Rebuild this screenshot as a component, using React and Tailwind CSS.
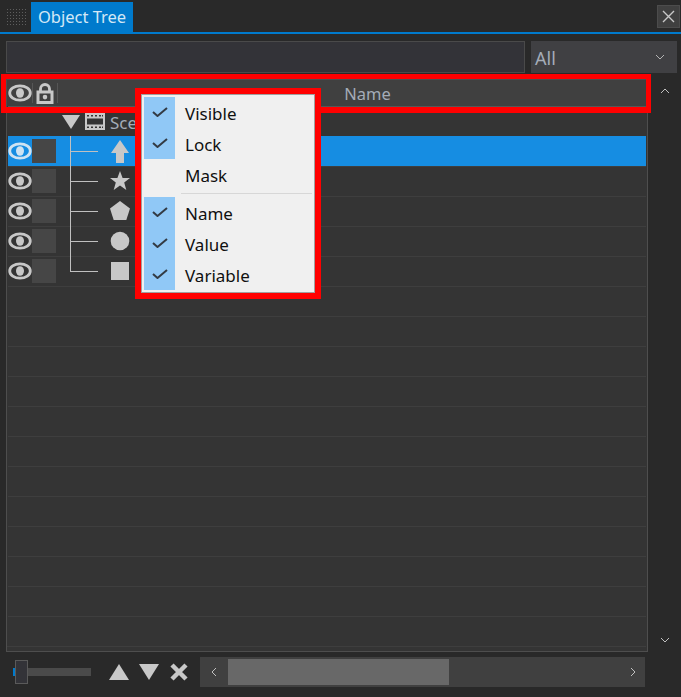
const fontStack = { fontFamily: '"Noto Sans", "Open Sans", sans-serif' };

const Eye = ({ color = "#c8c8c8" }) => (
  <svg width="24" height="18" viewBox="0 0 24 18">
    <ellipse cx="12" cy="9" rx="10.300" ry="7.200" fill="none" stroke={color} strokeWidth="2.800" />
    <ellipse cx="12" cy="9" rx="4" ry="4.800" fill={color} />
  </svg>
);

const Lock = () => (
  <svg width="18" height="21" viewBox="0 0 18 21">
    <path d="M4.500 9V6a4.500 4.500 0 0 1 9 0v3" fill="none" stroke="#c8c8c8" strokeWidth="2.800" />
    <path fillRule="evenodd" d="M0.500 7.500h17v13.500h-17zM3.500 10.500v7.500h11v-7.500zM9 11.800a2.300 2.300 0 1 1 0 4.600a2.300 2.300 0 0 1 0-4.600z" fill="#c8c8c8" />
  </svg>
);

const Film = () => (
  <svg width="20" height="17" viewBox="0 0 20 17">
    <path
      fillRule="evenodd"
      fill="#c8c8c8"
      d="M0 0h20v17H0zM2 2v1.500h2V2zM6 2v1.500h2V2zM10 2v1.500h2V2zM14 2v1.500h2V2zM17 2v1.500h1V2zM2 5.500v6h16v-6zM2 13.500V15h2v-1.500zM6 13.500V15h2v-1.500zM10 13.500V15h2v-1.500zM14 13.500V15h2v-1.500zM17 13.500V15h1v-1.500z"
    />
  </svg>
);

const shapes = [
  <polygon key="arrow" points="10,0 19,13 14,13 14,23 6,23 6,13 1,13" fill="#c8c8c8" />,
  <polygon key="star" points="10,1 12.600,8 20,8 14.200,12.500 16.300,20 10,15.600 3.700,20 5.800,12.500 0,8 7.400,8" fill="#c8c8c8" />,
  <polygon key="pentagon" points="10,1 20,8.500 16.300,20 3.700,20 0,8.500" fill="#c8c8c8" />,
  <circle key="circle" cx="10" cy="11" r="9.300" fill="#c8c8c8" />,
  <rect key="square" x="1" y="2" width="18" height="18" fill="#c8c8c8" />,
];

const ObjectRow = ({ shape, selected, last }) => (
  <div className={`flex h-[30px] items-center border-t ${selected ? "border-[#168de2] bg-[#168de2]" : "border-[#3e3e3e]"}`}>
    <div className="-mt-px flex w-[24px] justify-center">
      <Eye color={selected ? "#cfe3f2" : "#c8c8c8"} />
    </div>
    <div className="-mt-px h-[24px] w-[24px] bg-[#464646]" />
    <div className="-mt-px ml-[14px] flex h-[30px] w-[28px] flex-col self-start">
      <div className="h-[16px] border-b border-l border-[#c0c0c0]" />
      {!last && <div className="h-[14px] border-l border-[#c0c0c0]" />}
    </div>
    <svg className="ml-[12px]" width="20" height="24" viewBox="0 0 20 24">
      {shape}
    </svg>
  </div>
);

const MenuItem = ({ label, checked }) => (
  <div className="flex h-[31px] items-center">
    <div className={`flex h-full w-[31px] items-center justify-center ${checked ? "bg-[#90c8f6]" : ""}`}>
      {checked && (
        <svg width="16" height="10" viewBox="0 0 16 10" className="mb-px">
          <polyline points="1,5 5.500,9 15,1" fill="none" stroke="#333b44" strokeWidth="2" />
        </svg>
      )}
    </div>
    <span className="ml-[10px] pt-[2px] text-[17px] text-[#101010]">{label}</span>
  </div>
);

export default function App() {
  const emptyRows = Array.from({ length: 12 });

  return (
    <div className="relative flex h-[697px] w-[681px] flex-col overflow-hidden bg-[#292929]" style={fontStack}>
      {/* title bar */}
      <div className="flex h-[32px] items-end">
        <svg className="mb-[7px] ml-[7px]" width="20" height="16" viewBox="0 0 20 16">
          <defs>
            <pattern id="grip" width="3" height="3" patternUnits="userSpaceOnUse">
              <rect width="1" height="1" fill="#5e5e5e" />
            </pattern>
          </defs>
          <rect width="20" height="16" fill="url(#grip)" />
        </svg>
        <div className="ml-[4px] flex h-[30px] w-[102px] items-center justify-center bg-[#007acc] pt-px text-[16.500px] text-[#d4e8f6]">
          Object Tree
        </div>
        <div className="mb-[4px] ml-auto mr-[1px] flex h-[23px] w-[23px] items-center justify-center border border-[#4c4c4c] bg-[#404040]">
          <svg width="13" height="13" viewBox="0 0 13 13">
            <path d="M1 1l11 11M12 1L1 12" stroke="#c8c8c8" strokeWidth="1.400" />
          </svg>
        </div>
      </div>
      <div className="h-[2px] bg-[#007acc]" />

      {/* search and filter */}
      <div className="mt-[7px] flex h-[32px] px-[6px] pr-[4px]">
        <div className="w-[519px] border border-[#4a4a4a] bg-[#333338]" />
        <div className="ml-[6px] flex flex-1 items-center justify-between bg-[#404043] pl-[4px] pr-[12px] text-[18px] text-[#a4acb8]">
          <span className="pt-[2px]">All</span>
          <svg width="10" height="6" viewBox="0 0 10 6">
            <polyline points="1,1 5,5 9,1" fill="none" stroke="#b4b4b4" />
          </svg>
        </div>
      </div>

      {/* tree */}
      <div className="mt-[6px] flex h-[573px]">
        <div className="ml-[6px] w-[642px] border border-[#4e4e4e] bg-[#343434] pr-px">
          <div className="flex h-[26px] items-center bg-[#404040]">
            <div className="flex w-[25px] justify-center">
              <Eye />
            </div>
            <div className="h-[20px] border-l border-[#565656]" />
            <div className="flex w-[24px] justify-center">
              <Lock />
            </div>
            <div className="h-[20px] border-l border-[#565656]" />
            <div className="flex-1 pl-[31px] pt-[3px] text-center text-[16.500px] text-[#a4acb8]">Name</div>
          </div>
          <div className="border-b border-[#3e3e3e] pl-px">
            <div className="flex h-[30px] items-center border-t border-[#565656]">
              <svg className="ml-[54px]" width="18" height="14" viewBox="0 0 18 14">
                <polygon points="0,0 18,0 9,14" fill="#c8c8c8" />
              </svg>
              <div className="ml-[5px]">
                <Film />
              </div>
              <span className="ml-[5px] pt-[2px] text-[17px] text-[#a4acb8]">Scene</span>
            </div>
            {shapes.map((shape, i) => (
              <ObjectRow key={i} shape={shape} selected={i === 0} last={i === shapes.length - 1} />
            ))}
            {emptyRows.map((_, i) => (
              <div key={i} className="h-[30px] border-t border-[#3e3e3e]" />
            ))}
          </div>
        </div>
        <div className="flex flex-1 flex-col items-center justify-between py-[9px] pl-px">
          <svg width="10" height="6" viewBox="0 0 10 6">
            <polyline points="1,5 5,1 9,5" fill="none" stroke="#c0c0c0" />
          </svg>
          <svg width="10" height="6" viewBox="0 0 10 6">
            <polyline points="1,1 5,5 9,1" fill="none" stroke="#c0c0c0" />
          </svg>
        </div>
      </div>

      {/* footer */}
      <div className="mt-[5px] flex h-[30px] items-center pl-[13px]">
        <div className="flex w-[78px] items-center">
          <div className="h-[8px] w-[2px] bg-[#007acc]" />
          <div className="h-[24px] w-[13px] border border-[#5a5a5a] bg-[#333338]" />
          <div className="h-[8px] flex-1 bg-[#4a4a4a]" />
        </div>
        <svg className="ml-[18px]" width="20" height="16" viewBox="0 0 20 16">
          <polygon points="10,0 20,16 0,16" fill="#c8c8c8" />
        </svg>
        <svg className="ml-[10px]" width="20" height="16" viewBox="0 0 20 16">
          <polygon points="0,0 20,0 10,16" fill="#c8c8c8" />
        </svg>
        <svg className="ml-[10px]" width="20" height="18" viewBox="0 0 20 18">
          <path d="M3 2l14 14M17 2L3 16" stroke="#c8c8c8" strokeWidth="4.500" />
        </svg>
        <div className="ml-[11px] flex h-[30px] w-[445px] items-center bg-[#404040]">
          <div className="flex w-[28px] justify-center">
            <svg width="6" height="10" viewBox="0 0 6 10">
              <polyline points="5,1 1,5 5,9" fill="none" stroke="#c0c0c0" />
            </svg>
          </div>
          <div className="h-[26px] w-[221px] bg-[#686868]" />
          <div className="flex flex-1 justify-end pr-[9px]">
            <svg width="6" height="10" viewBox="0 0 6 10">
              <polyline points="1,1 5,5 1,9" fill="none" stroke="#c0c0c0" />
            </svg>
          </div>
        </div>
      </div>

      {/* red highlight over header */}
      <div className="pointer-events-none absolute left-[1px] top-[74px] h-[39px] w-[650px] border-[5px] border-b-[6px] border-[#ff0000]" />

      {/* context menu with red highlight */}
      <div className="absolute left-[135px] top-[88px] w-[186px] border-[6px] border-[#ff0000]">
        <div className="border border-[#a0a0a0] bg-[#f0f0f0] p-[2px]">
          <MenuItem label="Visible" checked />
          <MenuItem label="Lock" checked />
          <MenuItem label="Mask" />
          <div className="flex h-[7px] items-start pl-[37px] pt-[3px]">
            <div className="h-px flex-1 bg-[#d7d7d7]" />
          </div>
          <MenuItem label="Name" checked />
          <MenuItem label="Value" checked />
          <MenuItem label="Variable" checked />
        </div>
      </div>
    </div>
  );
}
